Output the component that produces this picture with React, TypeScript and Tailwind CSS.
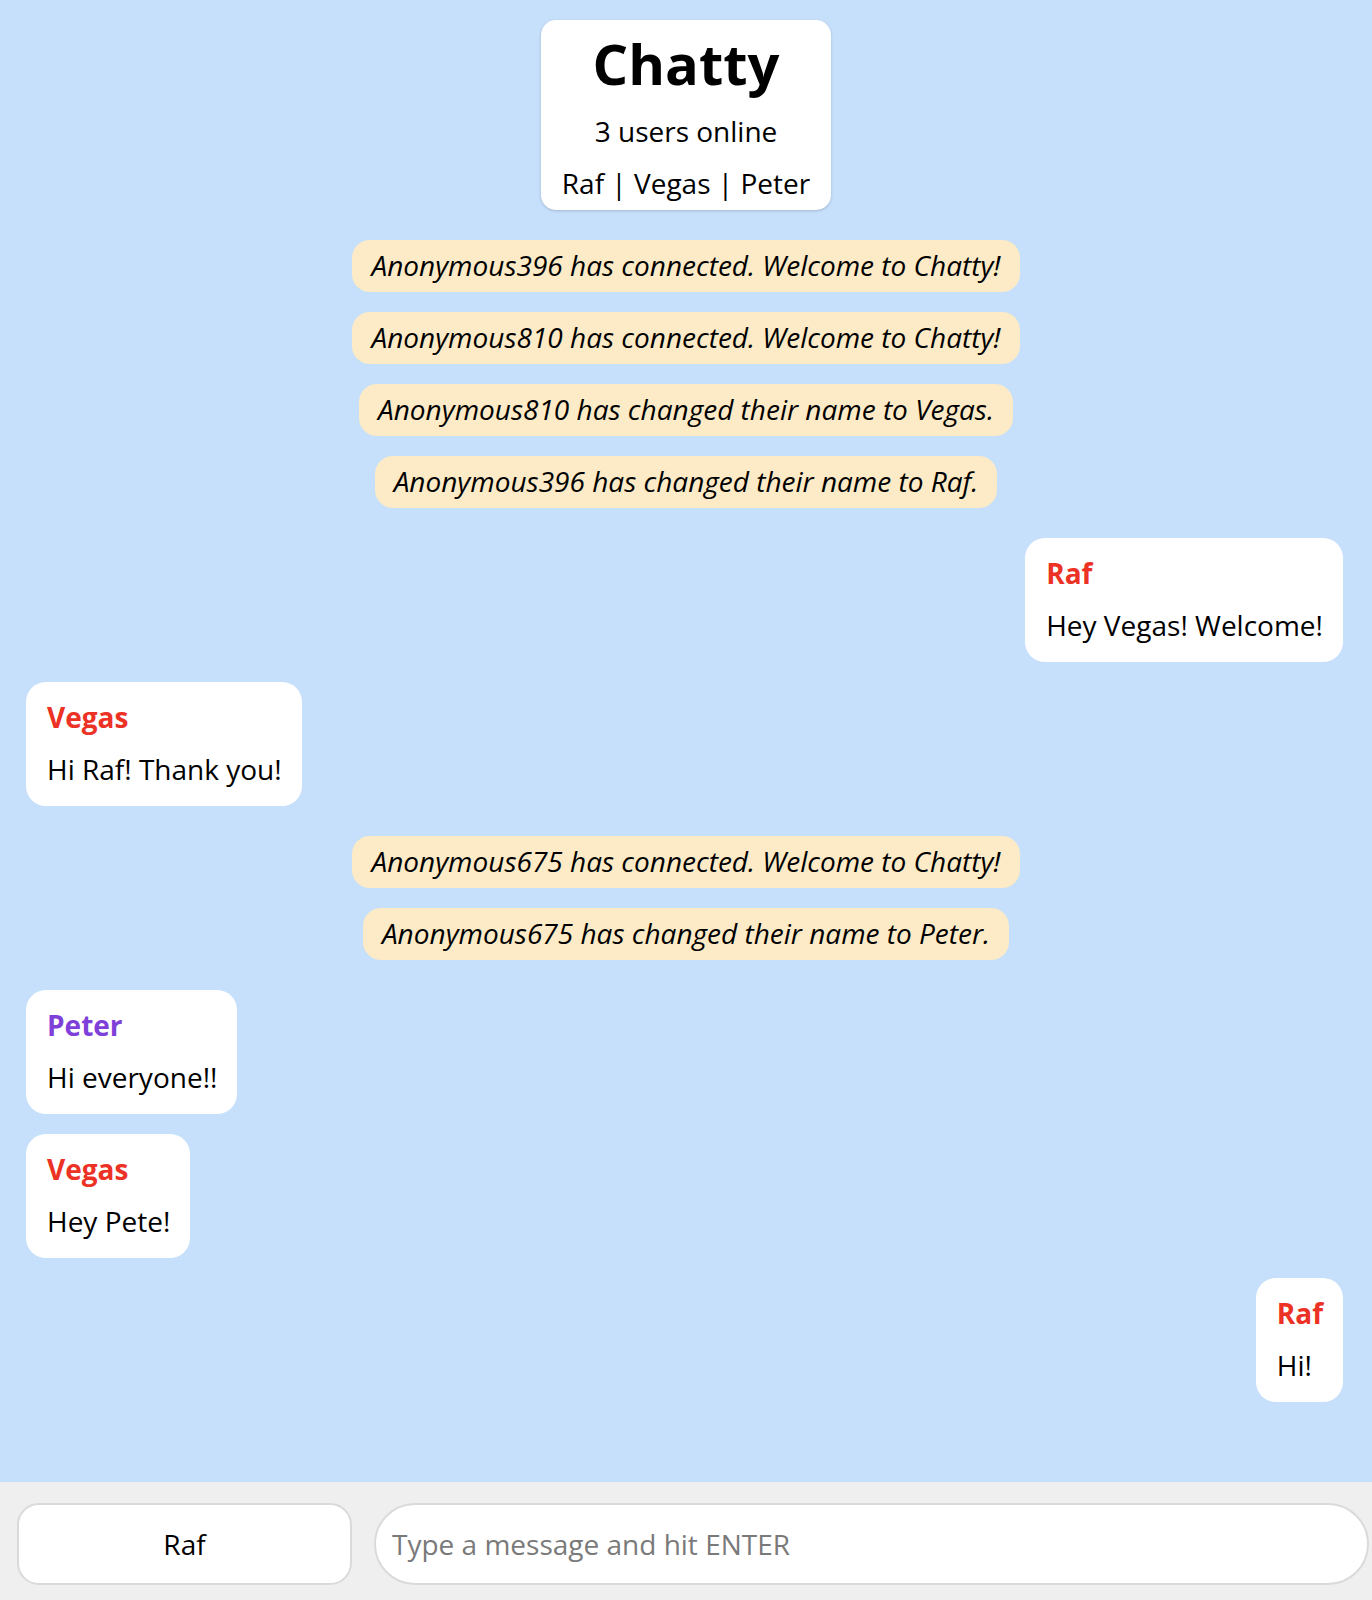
import React from 'react';

type Item =
  | { kind: 'system'; text: string }
  | { kind: 'message'; user: string; color: string; text: string; mine: boolean };

const items: Item[] = [
  { kind: 'system', text: 'Anonymous396 has connected. Welcome to Chatty!' },
  { kind: 'system', text: 'Anonymous810 has connected. Welcome to Chatty!' },
  { kind: 'system', text: 'Anonymous810 has changed their name to Vegas.' },
  { kind: 'system', text: 'Anonymous396 has changed their name to Raf.' },
  { kind: 'message', user: 'Raf', color: 'text-[#ec3225]', text: 'Hey Vegas! Welcome!', mine: true },
  { kind: 'message', user: 'Vegas', color: 'text-[#ec3225]', text: 'Hi Raf! Thank you!', mine: false },
  { kind: 'system', text: 'Anonymous675 has connected. Welcome to Chatty!' },
  { kind: 'system', text: 'Anonymous675 has changed their name to Peter.' },
  { kind: 'message', user: 'Peter', color: 'text-[#7f3fd9]', text: 'Hi everyone!!', mine: false },
  { kind: 'message', user: 'Vegas', color: 'text-[#ec3225]', text: 'Hey Pete!', mine: false },
  { kind: 'message', user: 'Raf', color: 'text-[#ec3225]', text: 'Hi!', mine: true },
];

const Header: React.FC = () => (
  <div className="flex justify-center pt-[20px]">
    <div className="w-[290px] rounded-[15px] bg-white pt-[13px] pb-[8px] text-center text-black shadow-[0_1px_3px_rgba(0,0,0,0.18)]">
      <h1 className="text-[56px] font-bold leading-[60px]">Chatty</h1>
      <p className="mt-[19px] text-[28px] leading-[38px]">3 users online</p>
      <p className="mt-[14px] text-[28px] leading-[38px]">Raf | Vegas | Peter</p>
    </div>
  </div>
);

const SystemNotice: React.FC<{ text: string; spacing: string }> = ({ text, spacing }) => (
  <div className={`flex justify-center ${spacing}`}>
    <div className="rounded-[18px] bg-[#fcebc6] px-[19px] pt-[6px] pb-[8px] text-[28px] italic leading-[38px] text-black">
      {text}
    </div>
  </div>
);

const ChatBubble: React.FC<{ user: string; color: string; text: string; mine: boolean; spacing: string }> = ({
  user,
  color,
  text,
  mine,
  spacing,
}) => (
  <div className={`flex ${mine ? 'justify-end pr-[29px]' : 'justify-start pl-[26px]'} ${spacing}`}>
    <div className="rounded-[20px] bg-white pl-[21px] pr-[20px] pt-[16px] pb-[18px]">
      <p className={`text-[28px] font-bold leading-[38px] ${color}`}>{user}</p>
      <p className="mt-[14px] text-[28px] leading-[38px] text-black">{text}</p>
    </div>
  </div>
);

const App: React.FC = () => {
  return (
    <div className="h-[1600px] w-full overflow-hidden font-['Open_Sans',sans-serif]">
      <main className="h-[1482px] overflow-hidden bg-[#c6dffb]">
        <Header />
        <div className="flex flex-col">
          {items.map((item, i) => {
            const prev = items[i - 1];
            // same kind in a row sits 20px apart, a change of kind 30px
            const spacing = !prev || prev.kind !== item.kind ? 'mt-[30px]' : 'mt-[20px]';
            if (item.kind === 'system') {
              return <SystemNotice key={i} text={item.text} spacing={spacing} />;
            }
            return (
              <ChatBubble
                key={i}
                user={item.user}
                color={item.color}
                text={item.text}
                mine={item.mine}
                spacing={spacing}
              />
            );
          })}
        </div>
      </main>

      <footer className="flex h-[118px] items-start gap-[22px] bg-[#efefef] pl-[17px] pr-[3px] pt-[21px]">
        <input
          defaultValue="Raf"
          className="h-[82px] w-[335px] shrink-0 rounded-[22px] border-2 border-[#dadada] bg-white text-center text-[28px] text-black outline-none"
        />
        <input
          autoFocus
          placeholder="Type a message and hit ENTER"
          className="h-[82px] min-w-0 flex-1 rounded-full border-2 border-[#dadada] bg-white pl-[16px] text-[28px] text-black caret-black outline-none placeholder:text-[#7a7a7a]"
        />
      </footer>
    </div>
  );
};

export default App;
